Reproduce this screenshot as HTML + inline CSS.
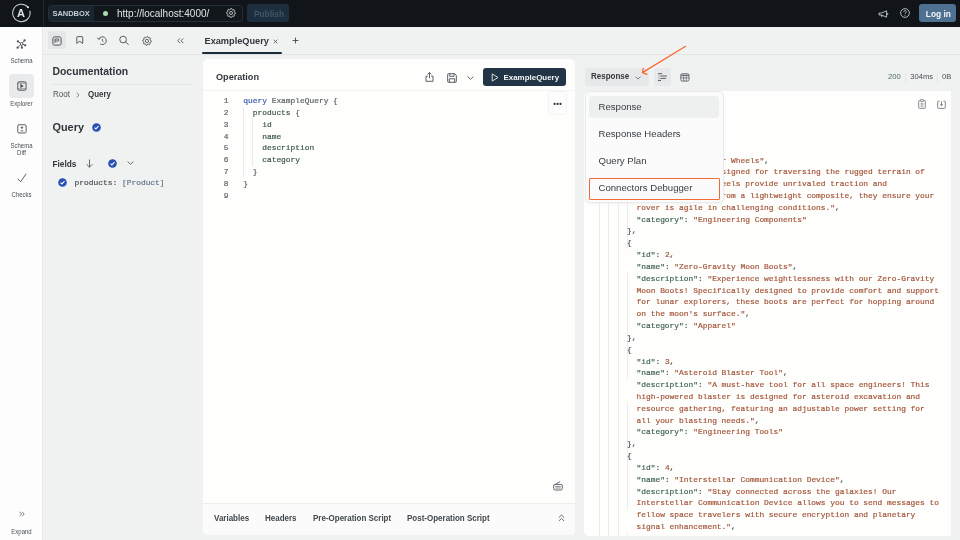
<!DOCTYPE html>
<html><head><meta charset="utf-8">
<style>
*{box-sizing:border-box;margin:0;padding:0}
html,body{width:960px;height:540px;overflow:hidden;background:#f0f1f1;font-family:"Liberation Sans",sans-serif;color:#2f3439}
.abs{position:absolute}
#top{left:0;top:0;width:960px;height:26.5px;background:#111519}
#nav{left:0;top:26.5px;width:43px;height:514px;background:#fdfdfd;border-right:1px solid #e8eae9}
.mono{font-family:"Liberation Mono",monospace}
.navlbl{position:absolute;width:43px;text-align:center;font-size:6.6px;color:#4a5055;line-height:7.2px;transform:scaleX(0.91)}
svg{position:absolute;overflow:visible}
.line{position:absolute;background:#e2e4e6}
</style></head><body><div id="root" style="position:absolute;left:0;top:0;width:960px;height:540px;will-change:transform">
<!-- TOP BAR -->
<div id="top" class="abs">
  <svg style="left:11px;top:4px" width="21" height="19" viewBox="0 0 21 19">
    <path d="M18.80 6.75 A8.7 8.7 0 1 1 16.97 3.29" fill="none" stroke="#c9ced3" stroke-width="1.05"/>
    <circle cx="16.97" cy="3.29" r="1.05" fill="#e4e8eb"/>
  </svg>
  <div class="abs" style="left:16.9px;top:8px;font-size:11px;font-weight:bold;color:#e0e4e8;line-height:11px">A</div>
  <div class="abs" style="left:43px;top:0;width:1px;height:26.5px;background:#1f2a33"></div>
  <div class="abs" style="left:47.7px;top:5px;width:195.3px;height:16.6px;border:1px solid #24313c;border-radius:3.5px;background:#12171c"></div>
  <div class="abs" style="left:48.7px;top:6px;width:45.5px;height:14.6px;background:#19242d;border-radius:2.5px 0 0 2.5px"></div>
  <div class="abs" style="left:52.5px;top:9px;font-size:7.5px;font-weight:bold;color:#c5ccd2;letter-spacing:-0.05px;line-height:9px">SANDBOX</div>
  <div class="abs" style="left:102.5px;top:10.5px;width:5px;height:5px;border-radius:50%;background:#a6dcae"></div>
  <div class="abs" style="left:117px;top:7.5px;font-size:10px;color:#dfe3e7;line-height:11px">http://localhost:4000/</div>
  <svg style="left:225.6px;top:8.2px" width="10" height="10" viewBox="0 0 10 10">
    <path d="M4.78 0.51 L5.66 0.55 L6.18 1.70 L6.80 2.00 L8.02 1.67 L8.61 2.32 L8.16 3.50 L8.40 4.15 L9.49 4.78 L9.45 5.66 L8.30 6.18 L8.00 6.80 L8.33 8.02 L7.68 8.61 L6.50 8.16 L5.85 8.40 L5.22 9.49 L4.34 9.45 L3.82 8.30 L3.20 8.00 L1.98 8.33 L1.39 7.68 L1.84 6.50 L1.60 5.85 L0.51 5.22 L0.55 4.34 L1.70 3.82 L2.00 3.20 L1.67 1.98 L2.32 1.39 L3.50 1.84 L4.15 1.60 Z" fill="none" stroke="#c2c8ce" stroke-width="0.95" stroke-linejoin="round"/>
    <circle cx="5" cy="5" r="1.5" fill="none" stroke="#c2c8ce" stroke-width="0.9"/>
  </svg>
  <div class="abs" style="left:247px;top:4px;width:42px;height:18px;background:#1d2f3e;border-radius:3px"></div>
  <div class="abs" style="left:254px;top:8.5px;font-size:8.3px;font-weight:bold;color:#3f566a;line-height:10px">Publish</div>
  <!-- megaphone -->
  <svg style="left:877.5px;top:9.5px" width="11" height="8" viewBox="0 0 11 8">
    <path d="M1 3 H3.6 L8.6 0.8 V7.2 L3.6 5 H1 Z" fill="none" stroke="#c2c8ce" stroke-width="0.9" stroke-linejoin="round"/>
    <path d="M3.4 5 L4 7.2" stroke="#c2c8ce" stroke-width="0.9"/>
    <path d="M9.7 3 V5" stroke="#c2c8ce" stroke-width="0.9"/>
  </svg>
  <svg style="left:900.4px;top:8.3px" width="10" height="10" viewBox="0 0 10 10">
    <circle cx="5" cy="5" r="4.35" fill="none" stroke="#c2c8ce" stroke-width="0.9"/>
    <path d="M3.8 3.9 A1.25 1.25 0 1 1 5.5 5 Q5 5.25 5 5.9" fill="none" stroke="#c2c8ce" stroke-width="0.85"/>
    <circle cx="5" cy="7.3" r="0.5" fill="#c2c8ce"/>
  </svg>
  <div class="abs" style="left:919px;top:4.2px;width:36.7px;height:18.2px;background:#4e7191;border-radius:3px"></div>
  <div class="abs" style="left:925.8px;top:8.6px;font-size:8.4px;font-weight:bold;color:#f4f6f8;line-height:10px">Log in</div>
</div>

<!-- LEFT NAV -->
<div id="nav" class="abs">
  <!-- schema icon -->
<svg style="left:0;top:0" width="43" height="40" viewBox="0 0 43 40">
<path d="M21.60 16.90 L17.90 14.40" stroke="#50565c" stroke-width="0.9"/>
<path d="M21.60 16.90 L24.60 13.40" stroke="#50565c" stroke-width="0.9"/>
<path d="M21.60 16.90 L25.20 18.30" stroke="#50565c" stroke-width="0.9"/>
<path d="M21.60 16.90 L21.90 20.70" stroke="#50565c" stroke-width="0.9"/>
<path d="M21.60 16.90 L17.60 20.70" stroke="#50565c" stroke-width="0.9"/>
<circle cx="17.90" cy="14.40" r="1.15" fill="#50565c"/>
<circle cx="24.60" cy="13.40" r="1.15" fill="#50565c"/>
<circle cx="25.20" cy="18.30" r="1.15" fill="#50565c"/>
<circle cx="21.90" cy="20.70" r="1.15" fill="#50565c"/>
<circle cx="17.60" cy="20.70" r="1.15" fill="#50565c"/>
<circle cx="21.60" cy="16.90" r="1.35" fill="#fdfdfd" stroke="#50565c" stroke-width="0.9"/>
</svg>
  <div class="navlbl" style="top:30.5px">Schema</div>
  <div class="abs" style="left:9px;top:47.5px;width:24.5px;height:24px;background:#e8eaeb;border-radius:4px"></div>
  <svg style="left:16.6px;top:54.5px" width="10" height="10" viewBox="0 0 10 10">
    <rect x="0.75" y="0.75" width="8.3" height="8.5" rx="1.3" fill="none" stroke="#50565c" stroke-width="0.95"/>
    <path d="M0.75 2.2 H9 M0.75 7.8 H9" stroke="#50565c" stroke-width="0.6"/>
    <path d="M3.6 3.3 L6.3 5 L3.6 6.7 Z" fill="#50565c" stroke="#50565c" stroke-width="0.6" stroke-linejoin="round"/>
  </svg>
  <div class="navlbl" style="top:73.2px">Explorer</div>
  <svg style="left:16.7px;top:97.1px" width="10" height="10" viewBox="0 0 10 10">
    <rect x="0.75" y="0.75" width="8.4" height="8.2" rx="1.3" fill="none" stroke="#50565c" stroke-width="0.95"/>
    <path d="M4.95 2.3 V5 M3.6 3.65 H6.3 M3.6 6.8 H6.3" fill="none" stroke="#50565c" stroke-width="0.85"/>
  </svg>
  <div class="navlbl" style="top:115.2px">Schema<br>Diff</div>
  <svg style="left:16.5px;top:146px" width="10" height="10" viewBox="0 0 10 10">
    <path d="M0.8 5.8 L3.6 8.8 L9.2 0.8" fill="none" stroke="#4a5056" stroke-width="0.9"/>
  </svg>
  <div class="navlbl" style="top:164.7px">Checks</div>
  <svg style="left:18.5px;top:484px" width="6" height="6" viewBox="0 0 6 6">
    <path d="M0.6 0.8 L2.6 3 L0.6 5.2 M3.2 0.8 L5.2 3 L3.2 5.2" fill="none" stroke="#5a6066" stroke-width="0.8"/>
  </svg>
  <div class="navlbl" style="top:501.2px">Expand</div>
</div>

<!-- DOC PANEL -->
<div class="line" style="left:43px;top:54px;width:917px;height:1px;background:#e2e4e5"></div>
<div class="abs" style="left:48px;top:31.3px;width:18px;height:18px;background:#e4e6e7;border-radius:3px"></div>
<svg style="left:52px;top:35.5px" width="10" height="10" viewBox="0 0 10 10">
  <rect x="0.9" y="0.9" width="8.2" height="8.2" rx="1.6" fill="none" stroke="#50565c" stroke-width="1"/>
  <path d="M3 6.8 V3 H6.6 V5 H3" fill="none" stroke="#50565c" stroke-width="0.9"/>
</svg>
<svg style="left:75.5px;top:36.3px" width="7.5" height="8" viewBox="0 0 7.5 8">
  <path d="M0.8 1.2 Q0.8 0.6 1.4 0.6 H6.1 Q6.7 0.6 6.7 1.2 V7.4 L3.75 5.3 L0.8 7.4 Z" fill="none" stroke="#50565c" stroke-width="0.95" stroke-linejoin="round"/>
</svg>
<svg style="left:97.3px;top:36px" width="9.5" height="9" viewBox="0 0 9.5 9">
  <path d="M1.9 2.9 A3.9 3.9 0 1 1 3.2 7.9" fill="none" stroke="#50565c" stroke-width="0.95"/>
  <path d="M0.5 1.8 L1.6 3.3 L3.3 2.6" fill="none" stroke="#50565c" stroke-width="0.95" stroke-linejoin="round"/>
  <path d="M5.3 2.8 V4.7 L6.6 5.6" fill="none" stroke="#50565c" stroke-width="0.9"/>
</svg>
<svg style="left:119.2px;top:36px" width="10" height="9" viewBox="0 0 10 9">
  <circle cx="4.1" cy="3.55" r="3.35" fill="none" stroke="#50565c" stroke-width="0.95"/>
  <path d="M6.5 6 L9.3 8.4" stroke="#50565c" stroke-width="0.95" stroke-linecap="round"/>
</svg>
<svg style="left:141.7px;top:35.5px" width="10" height="10" viewBox="0 0 10 10">
  <path d="M5.00 0.50 L5.86 0.58 L6.30 1.76 L6.89 2.07 L8.11 1.79 L8.66 2.46 L8.14 3.60 L8.33 4.24 L9.40 4.90 L9.32 5.76 L8.14 6.20 L7.83 6.79 L8.11 8.01 L7.44 8.56 L6.30 8.04 L5.66 8.23 L5.00 9.30 L4.14 9.22 L3.70 8.04 L3.11 7.73 L1.89 8.01 L1.34 7.34 L1.86 6.20 L1.67 5.56 L0.60 4.90 L0.68 4.04 L1.86 3.60 L2.17 3.01 L1.89 1.79 L2.56 1.24 L3.70 1.76 L4.34 1.57 Z" fill="none" stroke="#50565c" stroke-width="0.9" stroke-linejoin="round"/>
  <circle cx="5" cy="4.9" r="1.6" fill="none" stroke="#50565c" stroke-width="0.9"/>
</svg>
<svg style="left:176.5px;top:37.7px" width="7" height="5.5" viewBox="0 0 7 5.5">
  <path d="M3 0.4 L0.7 2.75 L3 5.1 M6.3 0.4 L4 2.75 L6.3 5.1" fill="none" stroke="#50565c" stroke-width="0.9"/>
</svg>

<div class="abs" style="left:52.5px;top:66.3px;font-size:10.4px;font-weight:bold;color:#30363b;line-height:12px">Documentation</div>
<div class="line" style="left:52px;top:84px;width:141px;height:1px;background:#e2e4e5"></div>
<div class="abs" style="left:52.6px;top:89.1px;font-size:8.6px;color:#4d5358;line-height:10px;transform:scaleX(0.93);transform-origin:0 0">Root</div>
<svg style="left:76px;top:91.5px" width="4" height="6" viewBox="0 0 4 6">
  <path d="M0.7 0.6 L3 3 L0.7 5.4" fill="none" stroke="#6a7076" stroke-width="0.8"/>
</svg>
<div class="abs" style="left:87.6px;top:89.1px;font-size:8.6px;font-weight:bold;color:#33393e;line-height:10px;transform:scaleX(0.92);transform-origin:0 0">Query</div>
<div class="abs" style="left:52.5px;top:121.2px;font-size:10.9px;font-weight:bold;color:#30363b;line-height:12px">Query</div>
<svg style="left:91.5px;top:123px" width="9" height="9" viewBox="0 0 9 9">
  <circle cx="4.5" cy="4.5" r="4.3" fill="#2651b0"/>
  <path d="M2.5 4.6 L3.9 5.9 L6.5 3.2" fill="none" stroke="#fff" stroke-width="1.05"/>
</svg>
<div class="abs" style="left:52.5px;top:158.8px;font-size:8.3px;font-weight:bold;color:#30363b;line-height:10px">Fields</div>
<svg style="left:86px;top:158.5px" width="7" height="9" viewBox="0 0 7 9">
  <path d="M3.5 0.5 V8.2 M0.6 5.3 L3.5 8.2 L6.4 5.3" fill="none" stroke="#4a5056" stroke-width="0.85"/>
</svg>
<svg style="left:107.5px;top:159px" width="9" height="9" viewBox="0 0 9 9">
  <circle cx="4.5" cy="4.5" r="4.3" fill="#2651b0"/>
  <path d="M2.5 4.6 L3.9 5.9 L6.5 3.2" fill="none" stroke="#fff" stroke-width="1.05"/>
</svg>
<svg style="left:127px;top:161px" width="7" height="4" viewBox="0 0 7 4">
  <path d="M0.6 0.6 L3.5 3.3 L6.4 0.6" fill="none" stroke="#4a5056" stroke-width="0.85"/>
</svg>
<svg style="left:58px;top:178px" width="9" height="9" viewBox="0 0 9 9">
  <circle cx="4.5" cy="4.5" r="4.3" fill="#2651b0"/>
  <path d="M2.5 4.6 L3.9 5.9 L6.5 3.2" fill="none" stroke="#fff" stroke-width="1.05"/>
</svg>
<div class="abs mono" style="left:74.6px;top:178px;font-size:7.9px;color:#4a5056;line-height:10px;white-space:pre;-webkit-text-stroke:0.2px">products: <span style="color:#60758a">[Product]</span></div>

<!-- TAB BAR -->
<div class="abs" style="left:204.5px;top:36.2px;font-size:9.2px;font-weight:bold;color:#30363b;line-height:11px">ExampleQuery</div>
<svg style="left:273px;top:39px" width="5" height="5" viewBox="0 0 5 5">
  <path d="M0.7 0.7 L4.3 4.3 M4.3 0.7 L0.7 4.3" stroke="#4a5056" stroke-width="0.8"/>
</svg>
<svg style="left:292px;top:37px" width="7" height="7" viewBox="0 0 7 7">
  <path d="M3.5 0.6 V6.4 M0.6 3.5 H6.4" stroke="#4a5056" stroke-width="0.95"/>
</svg>
<div class="abs" style="left:202.3px;top:51.5px;width:80px;height:2.6px;background:#1c2b39;border-radius:1.3px"></div>



<!-- OPERATION CARD -->
<div class="abs" style="left:202.5px;top:59px;width:372.5px;height:476px;background:#fefefd;border-radius:5px;overflow:hidden"></div>
<div class="line" style="left:202.5px;top:90px;width:372.5px;height:1px;background:#f3f4f4"></div>
<div class="abs" style="left:216px;top:72px;font-size:9.1px;font-weight:bold;color:#30363b;line-height:11px">Operation</div>
<div class="abs mono" style="left:216px;top:95.19px;width:12.5px;text-align:right;color:#5d6369;font-size:7.88px;line-height:11.82px;white-space:pre;-webkit-text-stroke:0.2px">1</div>
<div class="abs mono" style="left:243.30px;top:95.19px;font-size:7.88px;line-height:11.82px;white-space:pre;-webkit-text-stroke:0.2px"><span style="color:#3d5cb0">query</span> <span style="color:#5a6167">ExampleQuery {</span></div>
<div class="abs mono" style="left:216px;top:107.01px;width:12.5px;text-align:right;color:#5d6369;font-size:7.88px;line-height:11.82px;white-space:pre;-webkit-text-stroke:0.2px">2</div>
<div class="abs mono" style="left:252.76px;top:107.01px;font-size:7.88px;line-height:11.82px;white-space:pre;-webkit-text-stroke:0.2px"><span style="color:#3c5849">products</span> <span style="color:#5a6167">{</span></div>
<div class="abs mono" style="left:216px;top:118.83px;width:12.5px;text-align:right;color:#5d6369;font-size:7.88px;line-height:11.82px;white-space:pre;-webkit-text-stroke:0.2px">3</div>
<div class="abs mono" style="left:262.21px;top:118.83px;font-size:7.88px;line-height:11.82px;white-space:pre;-webkit-text-stroke:0.2px"><span style="color:#3c5849">id</span></div>
<div class="abs mono" style="left:216px;top:130.65px;width:12.5px;text-align:right;color:#5d6369;font-size:7.88px;line-height:11.82px;white-space:pre;-webkit-text-stroke:0.2px">4</div>
<div class="abs mono" style="left:262.21px;top:130.65px;font-size:7.88px;line-height:11.82px;white-space:pre;-webkit-text-stroke:0.2px"><span style="color:#3c5849">name</span></div>
<div class="abs mono" style="left:216px;top:142.47px;width:12.5px;text-align:right;color:#5d6369;font-size:7.88px;line-height:11.82px;white-space:pre;-webkit-text-stroke:0.2px">5</div>
<div class="abs mono" style="left:262.21px;top:142.47px;font-size:7.88px;line-height:11.82px;white-space:pre;-webkit-text-stroke:0.2px"><span style="color:#3c5849">description</span></div>
<div class="abs mono" style="left:216px;top:154.29px;width:12.5px;text-align:right;color:#5d6369;font-size:7.88px;line-height:11.82px;white-space:pre;-webkit-text-stroke:0.2px">6</div>
<div class="abs mono" style="left:262.21px;top:154.29px;font-size:7.88px;line-height:11.82px;white-space:pre;-webkit-text-stroke:0.2px"><span style="color:#3c5849">category</span></div>
<div class="abs mono" style="left:216px;top:166.11px;width:12.5px;text-align:right;color:#5d6369;font-size:7.88px;line-height:11.82px;white-space:pre;-webkit-text-stroke:0.2px">7</div>
<div class="abs mono" style="left:252.76px;top:166.11px;font-size:7.88px;line-height:11.82px;white-space:pre;-webkit-text-stroke:0.2px"><span style="color:#5a6167">}</span></div>
<div class="abs mono" style="left:216px;top:177.93px;width:12.5px;text-align:right;color:#5d6369;font-size:7.88px;line-height:11.82px;white-space:pre;-webkit-text-stroke:0.2px">8</div>
<div class="abs mono" style="left:243.30px;top:177.93px;font-size:7.88px;line-height:11.82px;white-space:pre;-webkit-text-stroke:0.2px"><span style="color:#5a6167">}</span></div>
<div class="abs mono" style="left:216px;top:189.75px;width:12.5px;text-align:right;color:#5d6369;font-size:7.88px;line-height:11.82px;white-space:pre;-webkit-text-stroke:0.2px">9</div>
<div class="abs" style="left:242.90px;top:107.01px;width:0.8px;height:70.92px;background:#eaecec"></div>
<div class="abs" style="left:252.36px;top:118.83px;width:0.8px;height:47.28px;background:#eaecec"></div>
<!-- RESPONSE -->
<div class="abs" style="left:584px;top:90.5px;width:367px;height:445px;background:#fefefd;border-radius:5px 0 0 5px;overflow:hidden">
<div class="abs" style="left:15.00px;top:16.78px;width:0.8px;height:543.72px;background:#eaecec"></div>
<div class="abs" style="left:24.46px;top:28.60px;width:0.8px;height:531.90px;background:#eaecec"></div>
<div class="abs" style="left:33.91px;top:40.42px;width:0.8px;height:520.08px;background:#eaecec"></div>
<div class="abs" style="left:43.37px;top:52.24px;width:0.8px;height:106.38px;background:#eaecec"></div>
<div class="abs" style="left:43.37px;top:182.26px;width:0.8px;height:106.38px;background:#eaecec"></div>
<div class="abs" style="left:43.37px;top:312.28px;width:0.8px;height:106.38px;background:#eaecec"></div>
<div class="abs" style="left:43.37px;top:442.30px;width:0.8px;height:106.38px;background:#eaecec"></div>
<div class="abs mono" style="left:14.70px;top:4.96px;font-size:7.88px;line-height:11.82px;white-space:pre;-webkit-text-stroke:0.2px"><span style="color:#4a5258">{</span></div>
<div class="abs mono" style="left:24.16px;top:16.78px;font-size:7.88px;line-height:11.82px;white-space:pre;-webkit-text-stroke:0.2px"><span style="color:#3e6452">"data"</span><span style="color:#4a5258">: </span><span style="color:#4a5258">{</span></div>
<div class="abs mono" style="left:33.61px;top:28.60px;font-size:7.88px;line-height:11.82px;white-space:pre;-webkit-text-stroke:0.2px"><span style="color:#3e6452">"products"</span><span style="color:#4a5258">: </span><span style="color:#4a5258">[</span></div>
<div class="abs mono" style="left:43.07px;top:40.42px;font-size:7.88px;line-height:11.82px;white-space:pre;-webkit-text-stroke:0.2px"><span style="color:#4a5258">{</span></div>
<div class="abs mono" style="left:52.52px;top:52.24px;font-size:7.88px;line-height:11.82px;white-space:pre;-webkit-text-stroke:0.2px"><span style="color:#3e6452">"id"</span><span style="color:#4a5258">: </span><span style="color:#a4563a">1</span><span style="color:#4a5258">,</span></div>
<div class="abs mono" style="left:52.52px;top:64.06px;font-size:7.88px;line-height:11.82px;white-space:pre;-webkit-text-stroke:0.2px"><span style="color:#3e6452">"name"</span><span style="color:#4a5258">: </span><span style="color:#a4563a">"Mars Rover Wheels"</span><span style="color:#4a5258">,</span></div>
<div class="abs mono" style="left:52.52px;top:75.88px;font-size:7.88px;line-height:11.82px;white-space:pre;-webkit-text-stroke:0.2px"><span style="color:#3e6452">"description"</span><span style="color:#4a5258">: </span><span style="color:#a4563a">"Designed for traversing the rugged terrain of</span></div>
<div class="abs mono" style="left:52.52px;top:87.70px;font-size:7.88px;line-height:11.82px;white-space:pre;-webkit-text-stroke:0.2px"><span style="color:#a4563a">Mars, these big wheels provide unrivaled traction and</span></div>
<div class="abs mono" style="left:52.52px;top:99.52px;font-size:7.88px;line-height:11.82px;white-space:pre;-webkit-text-stroke:0.2px"><span style="color:#a4563a">durability. Made from a lightweight composite, they ensure your</span></div>
<div class="abs mono" style="left:52.52px;top:111.34px;font-size:7.88px;line-height:11.82px;white-space:pre;-webkit-text-stroke:0.2px"><span style="color:#a4563a">rover is agile in challenging conditions."</span><span style="color:#4a5258">,</span></div>
<div class="abs mono" style="left:52.52px;top:123.16px;font-size:7.88px;line-height:11.82px;white-space:pre;-webkit-text-stroke:0.2px"><span style="color:#3e6452">"category"</span><span style="color:#4a5258">: </span><span style="color:#a4563a">"Engineering Components"</span><span style="color:#4a5258"></span></div>
<div class="abs mono" style="left:43.07px;top:134.98px;font-size:7.88px;line-height:11.82px;white-space:pre;-webkit-text-stroke:0.2px"><span style="color:#4a5258">},</span></div>
<div class="abs mono" style="left:43.07px;top:146.80px;font-size:7.88px;line-height:11.82px;white-space:pre;-webkit-text-stroke:0.2px"><span style="color:#4a5258">{</span></div>
<div class="abs mono" style="left:52.52px;top:158.62px;font-size:7.88px;line-height:11.82px;white-space:pre;-webkit-text-stroke:0.2px"><span style="color:#3e6452">"id"</span><span style="color:#4a5258">: </span><span style="color:#a4563a">2</span><span style="color:#4a5258">,</span></div>
<div class="abs mono" style="left:52.52px;top:170.44px;font-size:7.88px;line-height:11.82px;white-space:pre;-webkit-text-stroke:0.2px"><span style="color:#3e6452">"name"</span><span style="color:#4a5258">: </span><span style="color:#a4563a">"Zero-Gravity Moon Boots"</span><span style="color:#4a5258">,</span></div>
<div class="abs mono" style="left:52.52px;top:182.26px;font-size:7.88px;line-height:11.82px;white-space:pre;-webkit-text-stroke:0.2px"><span style="color:#3e6452">"description"</span><span style="color:#4a5258">: </span><span style="color:#a4563a">"Experience weightlessness with our Zero-Gravity</span></div>
<div class="abs mono" style="left:52.52px;top:194.08px;font-size:7.88px;line-height:11.82px;white-space:pre;-webkit-text-stroke:0.2px"><span style="color:#a4563a">Moon Boots! Specifically designed to provide comfort and support</span></div>
<div class="abs mono" style="left:52.52px;top:205.90px;font-size:7.88px;line-height:11.82px;white-space:pre;-webkit-text-stroke:0.2px"><span style="color:#a4563a">for lunar explorers, these boots are perfect for hopping around</span></div>
<div class="abs mono" style="left:52.52px;top:217.72px;font-size:7.88px;line-height:11.82px;white-space:pre;-webkit-text-stroke:0.2px"><span style="color:#a4563a">on the moon's surface."</span><span style="color:#4a5258">,</span></div>
<div class="abs mono" style="left:52.52px;top:229.54px;font-size:7.88px;line-height:11.82px;white-space:pre;-webkit-text-stroke:0.2px"><span style="color:#3e6452">"category"</span><span style="color:#4a5258">: </span><span style="color:#a4563a">"Apparel"</span><span style="color:#4a5258"></span></div>
<div class="abs mono" style="left:43.07px;top:241.36px;font-size:7.88px;line-height:11.82px;white-space:pre;-webkit-text-stroke:0.2px"><span style="color:#4a5258">},</span></div>
<div class="abs mono" style="left:43.07px;top:253.18px;font-size:7.88px;line-height:11.82px;white-space:pre;-webkit-text-stroke:0.2px"><span style="color:#4a5258">{</span></div>
<div class="abs mono" style="left:52.52px;top:265.00px;font-size:7.88px;line-height:11.82px;white-space:pre;-webkit-text-stroke:0.2px"><span style="color:#3e6452">"id"</span><span style="color:#4a5258">: </span><span style="color:#a4563a">3</span><span style="color:#4a5258">,</span></div>
<div class="abs mono" style="left:52.52px;top:276.82px;font-size:7.88px;line-height:11.82px;white-space:pre;-webkit-text-stroke:0.2px"><span style="color:#3e6452">"name"</span><span style="color:#4a5258">: </span><span style="color:#a4563a">"Asteroid Blaster Tool"</span><span style="color:#4a5258">,</span></div>
<div class="abs mono" style="left:52.52px;top:288.64px;font-size:7.88px;line-height:11.82px;white-space:pre;-webkit-text-stroke:0.2px"><span style="color:#3e6452">"description"</span><span style="color:#4a5258">: </span><span style="color:#a4563a">"A must-have tool for all space engineers! This</span></div>
<div class="abs mono" style="left:52.52px;top:300.46px;font-size:7.88px;line-height:11.82px;white-space:pre;-webkit-text-stroke:0.2px"><span style="color:#a4563a">high-powered blaster is designed for asteroid excavation and</span></div>
<div class="abs mono" style="left:52.52px;top:312.28px;font-size:7.88px;line-height:11.82px;white-space:pre;-webkit-text-stroke:0.2px"><span style="color:#a4563a">resource gathering, featuring an adjustable power setting for</span></div>
<div class="abs mono" style="left:52.52px;top:324.10px;font-size:7.88px;line-height:11.82px;white-space:pre;-webkit-text-stroke:0.2px"><span style="color:#a4563a">all your blasting needs."</span><span style="color:#4a5258">,</span></div>
<div class="abs mono" style="left:52.52px;top:335.92px;font-size:7.88px;line-height:11.82px;white-space:pre;-webkit-text-stroke:0.2px"><span style="color:#3e6452">"category"</span><span style="color:#4a5258">: </span><span style="color:#a4563a">"Engineering Tools"</span><span style="color:#4a5258"></span></div>
<div class="abs mono" style="left:43.07px;top:347.74px;font-size:7.88px;line-height:11.82px;white-space:pre;-webkit-text-stroke:0.2px"><span style="color:#4a5258">},</span></div>
<div class="abs mono" style="left:43.07px;top:359.56px;font-size:7.88px;line-height:11.82px;white-space:pre;-webkit-text-stroke:0.2px"><span style="color:#4a5258">{</span></div>
<div class="abs mono" style="left:52.52px;top:371.38px;font-size:7.88px;line-height:11.82px;white-space:pre;-webkit-text-stroke:0.2px"><span style="color:#3e6452">"id"</span><span style="color:#4a5258">: </span><span style="color:#a4563a">4</span><span style="color:#4a5258">,</span></div>
<div class="abs mono" style="left:52.52px;top:383.20px;font-size:7.88px;line-height:11.82px;white-space:pre;-webkit-text-stroke:0.2px"><span style="color:#3e6452">"name"</span><span style="color:#4a5258">: </span><span style="color:#a4563a">"Interstellar Communication Device"</span><span style="color:#4a5258">,</span></div>
<div class="abs mono" style="left:52.52px;top:395.02px;font-size:7.88px;line-height:11.82px;white-space:pre;-webkit-text-stroke:0.2px"><span style="color:#3e6452">"description"</span><span style="color:#4a5258">: </span><span style="color:#a4563a">"Stay connected across the galaxies! Our</span></div>
<div class="abs mono" style="left:52.52px;top:406.84px;font-size:7.88px;line-height:11.82px;white-space:pre;-webkit-text-stroke:0.2px"><span style="color:#a4563a">Interstellar Communication Device allows you to send messages to</span></div>
<div class="abs mono" style="left:52.52px;top:418.66px;font-size:7.88px;line-height:11.82px;white-space:pre;-webkit-text-stroke:0.2px"><span style="color:#a4563a">fellow space travelers with secure encryption and planetary</span></div>
<div class="abs mono" style="left:52.52px;top:430.48px;font-size:7.88px;line-height:11.82px;white-space:pre;-webkit-text-stroke:0.2px"><span style="color:#a4563a">signal enhancement."</span><span style="color:#4a5258">,</span></div>
<div class="abs mono" style="left:52.52px;top:442.30px;font-size:7.88px;line-height:11.82px;white-space:pre;-webkit-text-stroke:0.2px"><span style="color:#3e6452">"category"</span><span style="color:#4a5258">: </span><span style="color:#a4563a">"Communication Devices"</span><span style="color:#4a5258"></span></div>
<div class="abs mono" style="left:43.07px;top:454.12px;font-size:7.88px;line-height:11.82px;white-space:pre;-webkit-text-stroke:0.2px"><span style="color:#4a5258">},</span></div>
</div>
<!-- OP HEADER ICONS -->
<svg style="left:425px;top:72px" width="9" height="10" viewBox="0 0 9 10">
  <path d="M2.8 4.2 H1 V9.3 H8 V4.2 H6.2 M4.5 6.3 V0.6 M2.6 2.4 L4.5 0.6 L6.4 2.4" fill="none" stroke="#4a5056" stroke-width="0.9" stroke-linejoin="round"/>
</svg>
<svg style="left:447px;top:72.5px" width="10" height="10" viewBox="0 0 10 10">
  <path d="M0.7 1.4 Q0.7 0.7 1.4 0.7 H7.6 L9.3 2.4 V8.6 Q9.3 9.3 8.6 9.3 H1.4 Q0.7 9.3 0.7 8.6 Z" fill="none" stroke="#4a5056" stroke-width="0.95" stroke-linejoin="round"/>
  <path d="M2.8 0.7 V3.3 H7 V0.7 M2.4 9.3 V5.8 H7.6 V9.3" fill="none" stroke="#4a5056" stroke-width="0.9"/>
</svg>
<svg style="left:466.5px;top:75.5px" width="7" height="4" viewBox="0 0 7 4">
  <path d="M0.6 0.6 L3.5 3.3 L6.4 0.6" fill="none" stroke="#4a5056" stroke-width="0.85"/>
</svg>
<div class="abs" style="left:483.3px;top:68px;width:83px;height:17.8px;background:#213546;border-radius:3px"></div>
<svg style="left:491px;top:72.5px" width="8" height="9" viewBox="0 0 8 9">
  <path d="M1.2 0.9 L7 4.5 L1.2 8.1 Z" fill="none" stroke="#e8ecef" stroke-width="0.9" stroke-linejoin="round"/>
</svg>
<div class="abs" style="left:503.5px;top:71.5px;font-size:7.95px;font-weight:bold;color:#f2f4f6;line-height:11px">ExampleQuery</div>
<div class="abs" style="left:548.2px;top:90.8px;width:19.3px;height:23.8px;background:#fdfdfd;border:0.6px solid #f3f4f4;border-radius:3px"></div>
<svg style="left:552px;top:102px" width="10" height="4" viewBox="0 0 10 4">
  <circle cx="2.6" cy="1.9" r="1.1" fill="#2b3136"/><circle cx="5.55" cy="1.9" r="1.1" fill="#2b3136"/><circle cx="8.5" cy="1.9" r="1.1" fill="#2b3136"/>
</svg>
<!-- OP FOOTER -->
<div class="abs" style="left:202.5px;top:502.9px;width:372.5px;height:32.1px;background:#fafbfa;border-top:1px solid #eceeee;border-radius:0 0 5px 5px"></div>
<svg style="left:552.5px;top:480.8px" width="10" height="9.5" viewBox="0 0 10 9.5">
  <rect x="0.6" y="3.4" width="8.8" height="5.6" rx="1.7" fill="none" stroke="#50565c" stroke-width="0.9"/>
  <path d="M2.4 3.4 L7.2 0.5" fill="none" stroke="#50565c" stroke-width="0.85"/>
  <path d="M2.2 5.4 H7.8 M2.2 7 H7.8" stroke="#6a7076" stroke-width="0.8"/>
</svg>
<div class="abs" style="left:213.8px;top:512.6px;font-size:8.6px;font-weight:bold;color:#41474d;line-height:10px;transform:scaleX(0.93);transform-origin:0 0">Variables</div>
<div class="abs" style="left:265.3px;top:512.6px;font-size:8.6px;font-weight:bold;color:#41474d;line-height:10px;transform:scaleX(0.93);transform-origin:0 0">Headers</div>
<div class="abs" style="left:312.8px;top:512.6px;font-size:8.6px;font-weight:bold;color:#41474d;line-height:10px;transform:scaleX(0.93);transform-origin:0 0">Pre-Operation Script</div>
<div class="abs" style="left:407.3px;top:512.6px;font-size:8.6px;font-weight:bold;color:#41474d;line-height:10px;transform:scaleX(0.93);transform-origin:0 0">Post-Operation Script</div>
<svg style="left:558.2px;top:513.6px" width="7" height="8" viewBox="0 0 7 8">
  <path d="M0.8 3.6 L3.5 1 L6.2 3.6 M0.8 7 L3.5 4.4 L6.2 7" fill="none" stroke="#4a5056" stroke-width="0.85"/>
</svg>

<!-- RESPONSE TOOLBAR -->
<div class="abs" style="left:584.7px;top:68px;width:64px;height:17.8px;background:#e6e8e9;border-radius:3px"></div>
<div class="abs" style="left:591.2px;top:71.2px;font-size:8.7px;font-weight:bold;color:#33393e;line-height:11px;transform:scaleX(0.92);transform-origin:0 0">Response</div>
<svg style="left:634.5px;top:75.5px" width="6" height="4" viewBox="0 0 6 4">
  <path d="M0.5 0.6 L3 3.1 L5.5 0.6" fill="none" stroke="#5a6066" stroke-width="0.8"/>
</svg>
<div class="abs" style="left:653.7px;top:68px;width:17.5px;height:17.8px;background:#e6e8e9;border-radius:3px"></div>
<svg style="left:657px;top:72px" width="11" height="10" viewBox="0 0 11 10">
  <path d="M1 1.7 H5.2 M3.3 4 H9.9 M3.3 6.4 H9 M1 8.5 H4" fill="none" stroke="#5a6066" stroke-width="1"/>
  <path d="M2 2.2 V8" stroke="#7a8086" stroke-width="0.4"/>
</svg>
<svg style="left:680.2px;top:72.8px" width="10" height="9" viewBox="0 0 10 9">
  <rect x="0.8" y="0.8" width="8.2" height="7.3" rx="1.4" fill="none" stroke="#5a6066" stroke-width="0.9"/>
  <path d="M0.8 2.3 H9" stroke="#5a6066" stroke-width="1.1"/>
  <path d="M0.8 4.9 H9 M3.55 2.3 V8.1 M6.25 2.3 V8.1" fill="none" stroke="#5a6066" stroke-width="0.7"/>
</svg>
<div class="abs" style="left:888px;top:72px;font-size:7.7px;color:#52705d;line-height:10px">200</div>
<div class="abs" style="left:905px;top:72.5px;width:0.8px;height:9px;background:#e2e4e5"></div>
<div class="abs" style="left:910.3px;top:72px;font-size:7.6px;color:#4a5056;line-height:10px">304ms</div>
<div class="abs" style="left:937px;top:72.5px;width:0.8px;height:9px;background:#e2e4e5"></div>
<div class="abs" style="left:942px;top:72px;font-size:7.7px;color:#4a5056;line-height:10px">0B</div>
<!-- copy/download -->
<svg style="left:917.5px;top:99.3px" width="8" height="10" viewBox="0 0 8 10">
  <path d="M2.2 1.5 H1.4 Q0.7 1.5 0.7 2.2 V8.6 Q0.7 9.3 1.4 9.3 H6.6 Q7.3 9.3 7.3 8.6 V2.2 Q7.3 1.5 6.6 1.5 H5.8" fill="none" stroke="#6d7378" stroke-width="0.85"/>
  <rect x="2.3" y="0.6" width="3.4" height="1.8" rx="0.5" fill="none" stroke="#6d7378" stroke-width="0.8"/>
  <path d="M2.6 4.4 H5.4 M2.6 5.8 H5.4 M2.6 7.2 H5.4" stroke="#6d7378" stroke-width="0.65"/>
</svg>
<svg style="left:937.3px;top:99.5px" width="9" height="9" viewBox="0 0 9 9">
  <path d="M2.6 1.2 H1.5 Q0.7 1.2 0.7 2 V7.6 Q0.7 8.4 1.5 8.4 H7.5 Q8.3 8.4 8.3 7.6 V2 Q8.3 1.2 7.5 1.2 H6.4" fill="none" stroke="#6d7378" stroke-width="0.85"/>
  <path d="M4.5 1.4 V5.6 M3.1 4.3 L4.5 5.6 L5.9 4.3" fill="none" stroke="#6d7378" stroke-width="0.85"/>
</svg>

<!-- DROPDOWN -->
<div class="abs" style="left:584.5px;top:90.5px;width:139px;height:112.3px;background:#fbfbfc;border:1px solid #e8eaeb;border-radius:5px;box-shadow:0 1px 3px rgba(0,0,0,0.05)"></div>
<div class="abs" style="left:589.3px;top:96px;width:129.6px;height:21.6px;background:#eef0f0;border-radius:4px"></div>
<div class="abs" style="left:598.5px;top:101.2px;font-size:9.6px;color:#3a4046;line-height:11px">Response</div>
<div class="abs" style="left:598.5px;top:128px;font-size:9.6px;color:#3a4046;line-height:11px">Response Headers</div>
<div class="abs" style="left:598.5px;top:155.2px;font-size:9.6px;color:#3a4046;line-height:11px">Query Plan</div>
<div class="abs" style="left:598.5px;top:182px;font-size:9.6px;color:#3a4046;line-height:11px">Connectors Debugger</div>
<div class="abs" style="left:589.3px;top:177.6px;width:131.1px;height:22.8px;border:1.5px solid #f26a35;border-radius:1px"></div>

<!-- ARROW -->
<svg style="left:0;top:0" width="960" height="540" viewBox="0 0 960 540">
  <path d="M685.6 46.3 L642.4 72.6 M643.3 68.3 L642.4 72.6 L646.9 74.3" fill="none" stroke="#f8682e" stroke-width="1.25" stroke-linecap="round" stroke-linejoin="round"/>
</svg>

</div></body></html>
